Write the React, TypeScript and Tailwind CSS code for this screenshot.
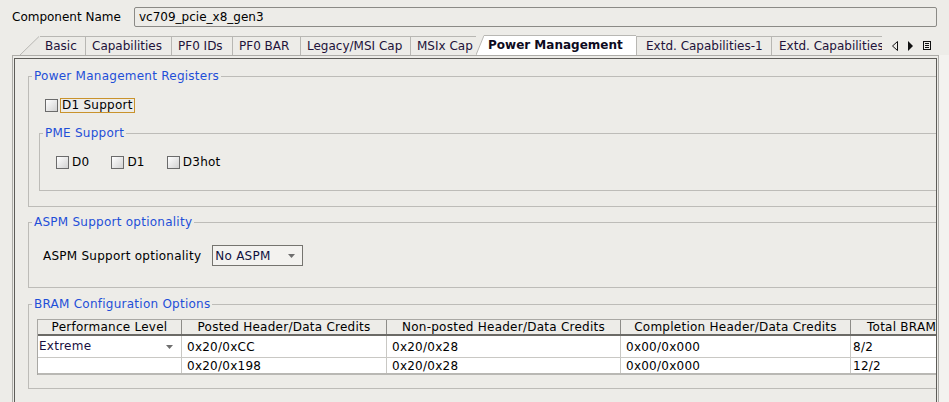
import React from 'react'

const Box = () => (
  <span className="block w-[13px] h-[13px] shrink-0 border border-[#6b6b6b] bg-linear-to-br from-white to-[#d2d2d2]" />
)

const Check = ({ label }: { label: string }) => (
  <div className="flex items-center gap-[3px]">
    <Box />
    <span className="leading-[14px]">{label}</span>
  </div>
)

const Group = ({ title, className, children }: { title: string; className: string; children: React.ReactNode }) => (
  <fieldset className={`border border-[#bdbcb8] p-0 m-0 ${className}`}>
    <legend className="ml-[3px] px-[2px] leading-[14px] text-[#1f4fd8]">{title}</legend>
    {children}
  </fieldset>
)

const DownArrow = () => (
  <svg width="7" height="4" viewBox="0 0 7 4" className="shrink-0">
    <polygon points="0,0 7,0 3.5,4" fill="#6e6e6e" />
  </svg>
)

const cols = ['w-[144px]', 'w-[205px]', 'w-[234px]', 'w-[230px]', 'w-[102px]']
const headers = ['Performance Level', 'Posted Header/Data Credits', 'Non-posted Header/Data Credits', 'Completion Header/Data Credits', 'Total BRAM']
const rows = [
  ['Extreme', '0x20/0xCC', '0x20/0x28', '0x00/0x000', '8/2'],
  ['', '0x20/0x198', '0x20/0x28', '0x00/0x000', '12/2'],
]

export default function App() {
  return (
    <div className="w-[949px] h-[402px] overflow-hidden bg-[#edece8] font-['DejaVu_Sans',sans-serif] text-[12px] text-black">
      {/* component name */}
      <div className="flex items-center h-[20px] mt-[7px] pl-[12px]">
        <span className="w-[122px] leading-[14px]">Component Name</span>
        <div className="w-[803px] h-[20px] border border-[#8b8a86] rounded-[2px] pl-[4px] leading-[18px]">vc709_pcie_x8_gen3</div>
      </div>

      {/* tabs */}
      <div className="flex items-end h-[20px] mt-[8px]">
        <div className="flex items-end w-[882px] pl-[20px] overflow-hidden text-[#22123a]">
          <svg width="20" height="19" viewBox="0 0 20 19" className="shrink-0">
            <polygon points="0,19 19,0 20,0 20,19" fill="#e9e8e4" />
            <line x1="0" y1="19" x2="19" y2="0.5" stroke="#b8b7b3" />
          </svg>
          <div className="w-[45px] h-[19px] shrink-0 border-t border-[#b8b7b3] pl-[5px] leading-[18px]">Basic</div>
          <div className="w-[86px] h-[19px] shrink-0 border-t border-l border-[#b8b7b3] pl-[6px] leading-[18px]">Capabilities</div>
          <div className="w-[61px] h-[19px] shrink-0 border-t border-l border-[#b8b7b3] pl-[6px] leading-[18px]">PF0 IDs</div>
          <div className="w-[68px] h-[19px] shrink-0 border-t border-l border-[#b8b7b3] pl-[6px] leading-[18px]">PF0 BAR</div>
          <div className="w-[110px] h-[19px] shrink-0 border-t border-l border-[#b8b7b3] pl-[6px] leading-[18px]">Legacy/MSI Cap</div>
          <div className="w-[66px] h-[19px] shrink-0 border-t border-l border-[#b8b7b3] pl-[6px] leading-[18px]">MSIx Cap</div>
          <svg width="8" height="20" viewBox="0 0 8 20" className="shrink-0">
            <polygon points="0,20 8,0 8,20" fill="#ffffff" />
            <line x1="0" y1="20" x2="8" y2="0.5" stroke="#b8b7b3" />
          </svg>
          <div className="w-[152px] h-[20px] shrink-0 bg-white border-t border-[#b8b7b3] pl-[4px] leading-[19px] font-bold text-[#0d0a20]">Power Management</div>
          <div className="w-[135px] h-[19px] shrink-0 border-t border-l border-[#b8b7b3] pl-[9px] leading-[18px]">Extd. Capabilities-1</div>
          <div className="w-[140px] h-[19px] shrink-0 border-t border-l border-[#b8b7b3] pl-[7px] leading-[18px] whitespace-nowrap">Extd. Capabilities-2</div>
        </div>
        <div className="flex items-center h-[19px] pl-[10px] gap-[10px]">
          <svg width="6" height="10" viewBox="0 0 6 10">
            <polygon points="5.5,0.5 0.5,5 5.5,9.5" fill="none" stroke="#111" />
          </svg>
          <svg width="5" height="10" viewBox="0 0 5 10">
            <polygon points="0,0 5,5 0,10" fill="#111" />
          </svg>
          <svg width="8" height="9" viewBox="0 0 8 9">
            <rect x="0.5" y="0.5" width="7" height="8" fill="none" stroke="#111" />
            <line x1="2" y1="2.5" x2="6" y2="2.5" stroke="#111" />
            <line x1="2" y1="4.5" x2="6" y2="4.5" stroke="#111" />
            <line x1="2" y1="6.5" x2="6" y2="6.5" stroke="#111" />
          </svg>
        </div>
      </div>

      {/* tab panel */}
      <div className="flex">
        <div className="ml-[12px] w-[927px] h-[360px] border border-[#adaca8] pt-[2px] px-[1px]">
          <div className="h-full border border-[#5d5c58] overflow-hidden pt-[10px] pl-[13px] tracking-[0.25px]">
            <Group title="Power Management Registers" className="w-[915px]">
              <div className="pt-[15px] pl-[10px] pb-[15px]">
                <div className="flex items-center gap-[2px] ml-[6px]">
                  <Box />
                  <span className="border border-[#c9932c] px-[1px] leading-[13px]">D1 Support</span>
                </div>
                <Group title="PME Support" className="w-[905px] mt-[13px]">
                  <div className="flex items-center gap-[22px] pt-[15px] pl-[16px] pb-[21px]">
                    <Check label="D0" />
                    <Check label="D1" />
                    <Check label="D3hot" />
                  </div>
                </Group>
              </div>
            </Group>

            <Group title="ASPM Support optionality" className="w-[915px] mt-[8px]">
              <div className="flex items-center pt-[16px] pl-[14px] pb-[21px]">
                <span className="leading-[14px]">ASPM Support optionality</span>
                <div className="ml-[11px] w-[91px] h-[21px] border border-[#75746f] bg-[#f3f2ef] flex items-center justify-between pl-[2px] pr-[7px] text-[#101040]">
                  <span className="leading-[14px]">No ASPM</span>
                  <DownArrow />
                </div>
              </div>
            </Group>

            <Group title="BRAM Configuration Options" className="w-[915px] mt-[9px]">
              <div className="pt-[8px] pl-[8px] pb-[13px]">
                <div className="flex flex-col w-[916px] border-l border-t border-[#a9a8a4]">
                  <div className="flex h-[16px] border-b-2 border-[#6b6a66]">
                    {headers.map((h, i) => (
                      <div key={h} className={`${cols[i]} shrink-0 text-center leading-[14px] border-r border-[#8d8c88] whitespace-nowrap overflow-hidden`}>{h}</div>
                    ))}
                  </div>
                  {rows.map((r, ri) => (
                    <div key={ri} className={`flex bg-white border-b border-[#c9c8c4] ${ri === 0 ? 'h-[22px]' : 'h-[17px] border-b-2 border-b-[#b9b8b4]'}`}>
                      {r.map((c, ci) => (
                        <div
                          key={ci}
                          className={`${cols[ci]} shrink-0 flex items-center border-r border-[#c9c8c4] leading-[14px] ${ci === 0 ? 'pl-[1px] pr-[8px] justify-between' : ci === 4 ? 'pl-[2px]' : 'pl-[5px]'}`}
                        >
                          <span className={ri === 0 && ci === 0 ? 'text-[#1a1040] -mt-[2px]' : ''}>{c}</span>
                          {ri === 0 && ci === 0 && <DownArrow />}
                        </div>
                      ))}
                    </div>
                  ))}
                </div>
              </div>
            </Group>
          </div>
        </div>
        <div className="flex-1 bg-[#f3f2ef]" />
      </div>
    </div>
  )
}
